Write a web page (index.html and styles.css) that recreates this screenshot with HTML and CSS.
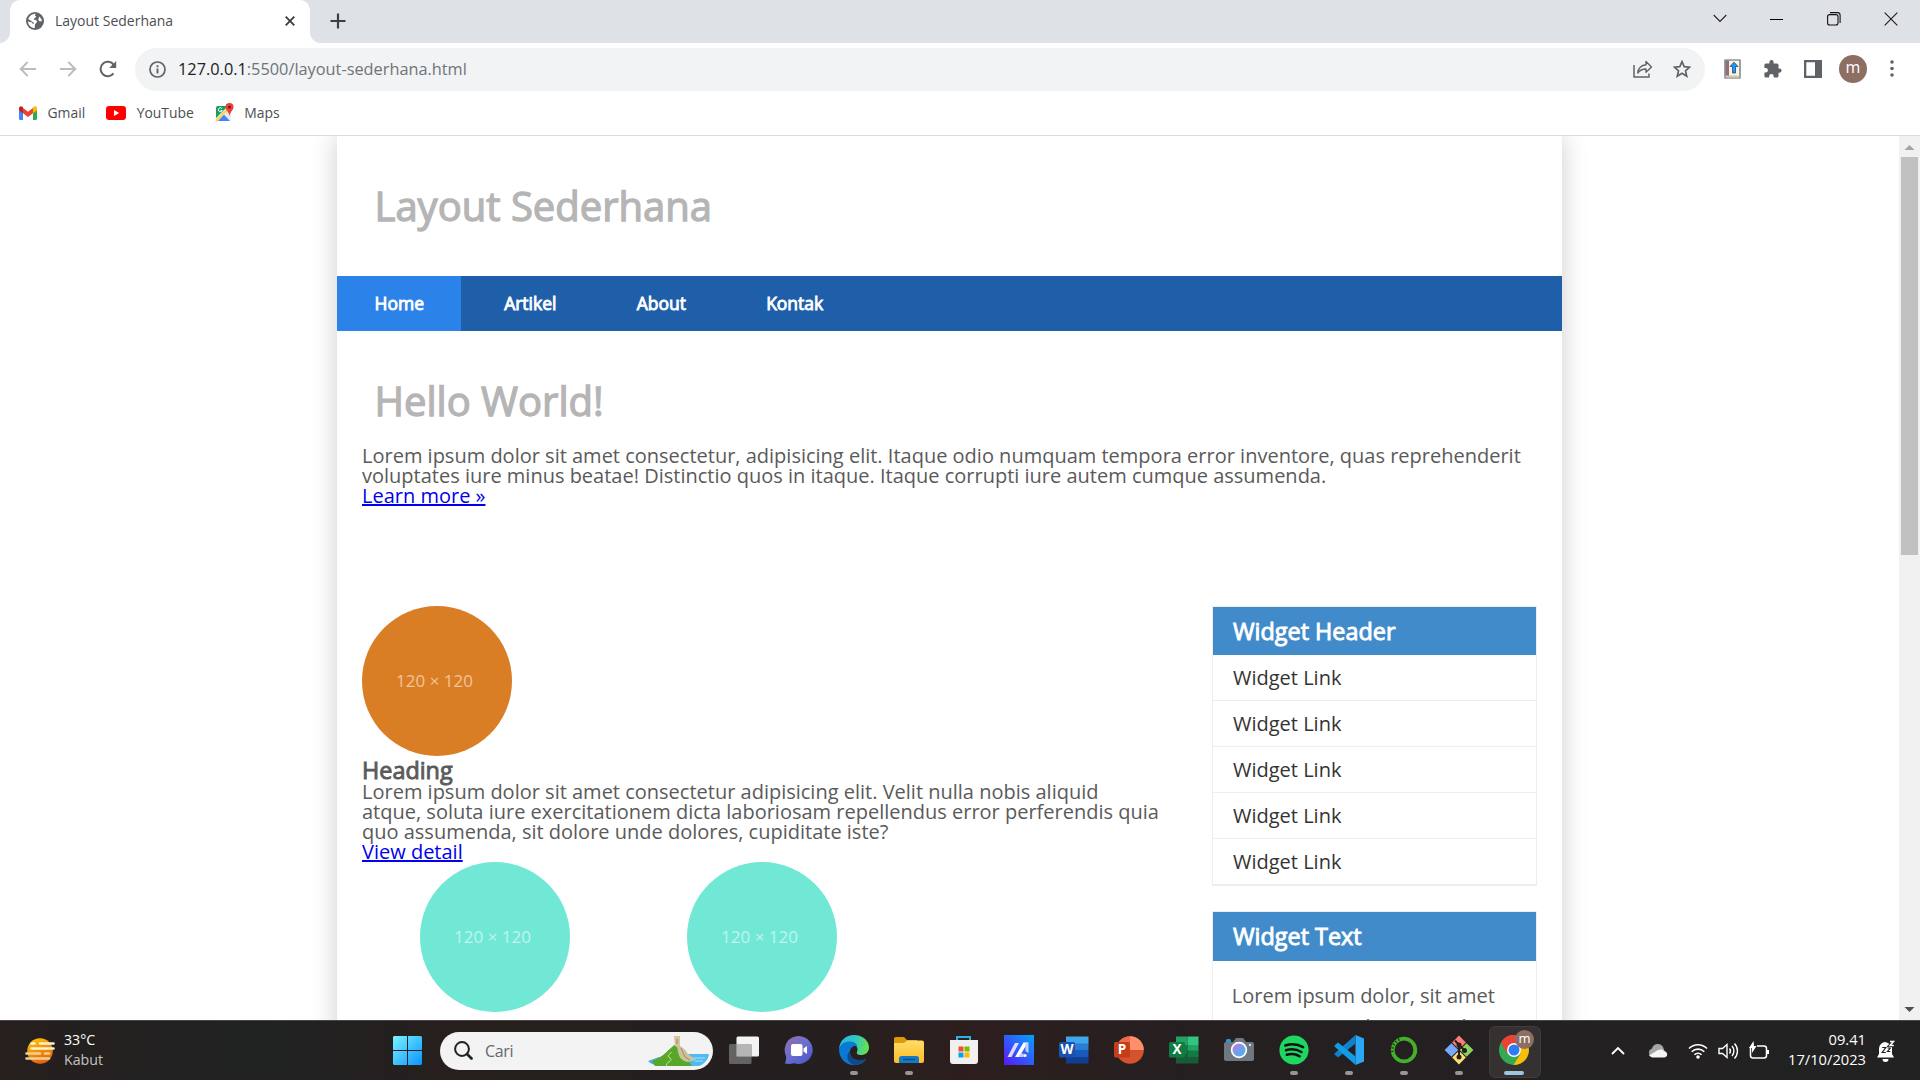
FILE: index.html
```
<!DOCTYPE html>
<html lang="id">
<head>
<meta charset="utf-8">
<title>Layout Sederhana</title>
<link rel="stylesheet" href="styles.css">
</head>
<body>
<div class="screen">
  <header class="browser">
    <div class="tabstrip">
      <div class="tab">
        <svg class="favicon" width="18" height="18" viewBox="0 0 18 18"><circle cx="9" cy="9" r="9" fill="#5f6368"/><path d="M10 1.800C8.500 3 8.800 4 10.300 4.300 9.800 6 8 6 7.700 7.500 9.500 7.700 11.300 8.300 11 10 10.600 11.300 9.300 11 9 12.500L8.700 16C5 15.800 2 13 2 9.400L5.500 10.300C6.500 10.600 6.200 12 7.600 12.300L7.700 10.400C6 10 5.500 8.500 2.300 7.200 3.200 3.900 6.300 1.700 10 1.800ZM13 4.400C14.700 5.600 15.800 7 16 9.200 14.800 9.400 13.300 9.500 12.500 8.200 11.800 6.800 13.300 6 13 4.400Z" fill="#fff"/></svg>
        <span class="tab-title">Layout Sederhana</span>
        <svg class="tab-close" width="10" height="10" viewBox="0 0 10 10"><path d="M.7.7 9.300 9.300M9.300.7.7 9.300" stroke="#3c4043" stroke-width="1.900"/></svg>
      </div>
      <svg class="new-tab" width="16" height="16" viewBox="0 0 16 16"><path d="M8 .5v15M.5 8h15" stroke="#3c4043" stroke-width="2.200"/></svg>
      <div class="window-controls">
        <svg width="14" height="9" viewBox="0 0 14 9"><path d="M.7 1 7 7.500 13.300 1" fill="none" stroke="#222" stroke-width="1.100"/></svg>
        <svg width="14" height="9" viewBox="0 0 14 9"><path d="M0 5.500h13" stroke="#000"/></svg>
        <svg width="14" height="14" viewBox="0 0 14 14"><rect x=".6" y="2.600" width="10.400" height="10.400" rx="2" fill="none" stroke="#111" stroke-width="1.100"/><path d="M3 .6h7.500a2.600 2.600 0 0 1 2.600 2.600V11" fill="none" stroke="#111" stroke-width="1.100"/></svg>
        <svg width="14" height="14" viewBox="0 0 14 14"><path d="M.7.7 13.300 13.300M13.300.7.7 13.300" stroke="#222" stroke-width="1.200"/></svg>
      </div>
    </div>
    <div class="toolbar">
      <div class="nav-buttons">
        <svg width="18" height="16" viewBox="0 0 18 16"><path d="M17 8H2M8.700 1 1.700 8l7 7" fill="none" stroke="#babcbe" stroke-width="1.900"/></svg>
        <svg width="18" height="16" viewBox="0 0 18 16"><path d="M1 8h15M9.300 1l7 7-7 7" fill="none" stroke="#babcbe" stroke-width="1.900"/></svg>
        <svg width="18" height="18" viewBox="0 0 18 18"><path d="M14.500 13.300A7.200 7.200 0 1 1 14.700 4.900" fill="none" stroke="#5f6368" stroke-width="2"/><path d="M17.200 1v7h-7Z" fill="#5f6368"/></svg>
      </div>
      <div class="omnibox">
        <svg class="info" width="17" height="17" viewBox="0 0 17 17"><circle cx="8.500" cy="8.500" r="7.500" fill="none" stroke="#5f6368" stroke-width="1.700"/><path d="M8.500 7.500v5M8.500 4.300v1.900" stroke="#5f6368" stroke-width="1.900"/></svg>
        <span class="url"><b>127.0.0.1</b>:5500/layout-sederhana.html</span>
        <svg class="share" width="20" height="18" viewBox="0 0 20 18"><path d="M1 5v12h15v-3.500" fill="none" stroke="#5f6368" stroke-width="1.500"/><path d="M4.800 13C5 8.500 8.300 5 13 4.800V1.500L18.500 7 13 12.300V9C9.500 9 7 10 4.800 13Z" fill="none" stroke="#5f6368" stroke-width="1.400" stroke-linejoin="round"/></svg>
        <svg class="star" width="18" height="18" viewBox="0 0 18 18"><path d="M9 1.700 11.200 6.700 16.600 7.200 12.500 10.800 13.700 16.200 9 13.300 4.300 16.200 5.500 10.800 1.400 7.200 6.800 6.700Z" fill="none" stroke="#5f6368" stroke-width="1.700"/></svg>
      </div>
      <div class="extensions">
        <svg width="17" height="20" viewBox="0 0 17 20"><path d="M1 1h15v18H1Z" fill="#fdf3dc" stroke="#52657a" stroke-width="1.200"/><path d="M1.500 1.500H5v15.500H1.500Z" fill="#8f6d7d"/><path d="M1.500 16.500h14v2h-14Z" fill="#d8c7a4"/><path d="M10 3.200 14 7.500H11.500V14h-3V7.500H6Z" fill="#2196f3" stroke="#174f86" stroke-width=".8"/></svg>
        <svg width="18" height="18" viewBox="0 0 18 18"><path d="M15.500 8.500h-1V5a1.600 1.600 0 0 0-1.600-1.600H9.600V2.200a2.100 2.100 0 0 0-4.200 0v1.200H2A1.600 1.600 0 0 0 .4 5v3h1.200a2.300 2.300 0 0 1 0 4.600H.4V16A1.600 1.600 0 0 0 2 17.600h3.100v-1.200a2.300 2.300 0 0 1 4.600 0v1.200h3.200a1.600 1.600 0 0 0 1.600-1.600v-3.300h1a2.100 2.100 0 0 0 0-4.200Z" fill="#5f6368"/></svg>
        <svg width="18" height="18" viewBox="0 0 18 18"><path d="M0 0h18v18H0ZM2.300 2.300v13.400h8.700V2.300Z" fill="#5f6368" fill-rule="evenodd"/></svg>
        <span class="avatar">m</span>
        <svg width="4" height="17" viewBox="0 0 4 17"><g fill="#5f6368"><circle cx="2" cy="2" r="1.800"/><circle cx="2" cy="8.500" r="1.800"/><circle cx="2" cy="15" r="1.800"/></g></svg>
      </div>
    </div>
    <div class="bookmarks">
      <span class="bookmark"><svg width="18" height="14" viewBox="0 0 18 14"><path d="M0 2v10.800A1.200 1.200 0 0 0 1.200 14H4V5Z" fill="#4285f4"/><path d="M18 2v10.800a1.200 1.200 0 0 1-1.200 1.200H14V5Z" fill="#34a853"/><path d="M4 7.300V2l5 3.800L14 2v5.300L9 11Z" fill="#ea4335"/><path d="M0 2.300C0 .2 2 -.4 3.300.7L4 1.300v6L0 4.300Z" fill="#c5221f"/><path d="M18 2.300C18 .2 16-.4 14.700.7L14 1.300v6l4-3Z" fill="#fbbc04"/></svg>Gmail</span>
      <span class="bookmark yt"><svg width="20" height="14" viewBox="0 0 20 14"><rect width="20" height="14" rx="3.200" fill="#f00"/><path d="M8 4v6l5.200-3Z" fill="#fff"/></svg>YouTube</span>
      <span class="bookmark maps"><svg width="19" height="19" viewBox="0 0 19 19"><rect x="1" y="3" width="15" height="15" rx="2" fill="#e8eaed"/><path d="M1 5a2 2 0 0 1 2-2h10L1 15Z" fill="#1a9e5c"/><path d="M1 18 14 5" stroke="#fdd663" stroke-width="2.600"/><path d="M3 18l6-6.200 6 6.200Z" fill="#4285f4"/><path d="M7 5.600A2 2 0 1 0 7.200 7.500H5.500" fill="none" stroke="#fff" stroke-width="1"/><path d="M14.500 0a4 4 0 0 1 4 4c0 3.300-3.300 4.500-4 9-.7-4.500-4-5.700-4-9a4 4 0 0 1 4-4Z" fill="#ea4335"/><circle cx="14.500" cy="4" r="1.500" fill="#811411"/></svg>Maps</span>
    </div>
  </header>

  <div class="viewport">
    <div class="page">
      <div class="container">
        <header class="site-header"><h1>Layout Sederhana</h1></header>
        <nav class="site-nav"><a class="active">Home</a><a>Artikel</a><a>About</a><a>Kontak</a></nav>
        <section class="hero">
          <h1>Hello World!</h1>
          <p>Lorem ipsum dolor sit amet consectetur, adipisicing elit. Itaque odio numquam tempora error inventore, quas reprehenderit voluptates iure minus beatae! Distinctio quos in itaque. Itaque corrupti iure autem cumque assumenda.</p>
          <a class="link">Learn more »</a>
        </section>
        <div class="columns">
          <main class="article">
            <div class="circle orange">120 × 120</div>
            <h3>Heading</h3>
            <p>Lorem ipsum dolor sit amet consectetur adipisicing elit. Velit nulla nobis aliquid<br>atque, soluta iure exercitationem dicta laboriosam repellendus error perferendis quia<br>quo assumenda, sit dolore unde dolores, cupiditate iste?</p>
            <a class="link">View detail</a>
            <div class="features">
              <div class="circle teal">120 × 120</div>
              <div class="circle teal">120 × 120</div>
            </div>
          </main>
          <aside class="sidebar">
            <div class="widget">
              <h3>Widget Header</h3>
              <ul><li>Widget Link</li><li>Widget Link</li><li>Widget Link</li><li>Widget Link</li><li>Widget Link</li></ul>
            </div>
            <div class="widget">
              <h3>Widget Text</h3>
              <p>Lorem ipsum dolor, sit amet consectetur adipisicing elit.</p>
            </div>
          </aside>
        </div>
      </div>
    </div>
    <div class="scrollbar">
      <svg width="21" height="21" viewBox="0 0 21 21"><path d="M5.500 14 10.500 9l5 5Z" fill="#a3a3a3"/></svg>
      <div class="thumb"></div>
      <svg class="down" width="21" height="21" viewBox="0 0 21 21"><path d="M5.500 8 10.500 13l5-5Z" fill="#505050"/></svg>
    </div>
  </div>

  <footer class="taskbar">
    <div class="weather">
      <svg width="30" height="26" viewBox="0 0 30 26"><defs><linearGradient id="sun" x1="0" y1="0" x2=".4" y2="1"><stop offset="0" stop-color="#ffc907"/><stop offset="1" stop-color="#e8660c"/></linearGradient></defs><circle cx="15" cy="13" r="12.800" fill="url(#sun)"/><g stroke-width="2.600" stroke-linecap="round"><path d="M6.500 5.500H9.500M15 5.500H28.500M6.500 10.500H28.500" stroke="#fff1cf"/><path d="M1.500 15.500H15M20 15.500h4M1.500 20.500H24" stroke="#f0cf97"/></g></svg>
      <div class="weather-text"><span>33°C</span><span class="dim">Kabut</span></div>
    </div>
    <svg class="start" width="29" height="29" viewBox="0 0 29 29"><defs><linearGradient id="win" x1="0" y1="0" x2="1" y2="1"><stop offset="0" stop-color="#7af2ff"/><stop offset="1" stop-color="#0a94ff"/></linearGradient></defs><path d="M1 0h13v14H0V1ZM15 0h13l1 1v13H15ZM0 15h14v14H1l-1-1ZM15 15h14v13l-1 1H15Z" fill="url(#win)"/></svg>
    <div class="search">
      <svg width="19" height="19" viewBox="0 0 19 19"><circle cx="8" cy="8" r="6.900" fill="none" stroke="#222" stroke-width="2"/><path d="m13 13 4.500 4.500" stroke="#222" stroke-width="2.700" stroke-linecap="round"/></svg>
      <span>Cari</span>
      <svg class="art" width="63" height="32" viewBox="0 0 63 32"><path d="M1 26 12 22 22 31H12C6 30 3 28 1 26Z" fill="#4cabec"/><path d="M40 19h22c-1 6-5 10-10 12H35Z" fill="#4fb9f0"/><path d="M44 23h14M48 26h8" stroke="#a8e4ff"/><path d="M8 31 5 26C17 22 21 14 29 9L45 31Z" fill="#58a62a"/><path d="M20 31c-3-4 7-4 3-8-5-3 2-4 1-6" fill="none" stroke="#c5e88a"/><path d="M27 1h6v13l-5-3Z" fill="#d8c39c"/><path d="M30 10c5 1 9 5 11 9l8 6-9 2C32 25 31 19 30 10Z" fill="#cfc29b"/><path d="m34 13 4 9 5 3" fill="none" stroke="#998c6c"/><path d="M30 4v5" stroke="#9c805a"/></svg>
    </div>
    <div class="apps">
      <div class="app"><svg width="30" height="30" viewBox="0 0 30 30"><rect x="7.500" y="1.500" width="22.500" height="20" rx="1.500" fill="#f3f3f3"/><rect y="9" width="22.500" height="20" rx="1.500" fill="#707070" fill-opacity=".85"/><path d="M7.500 9h15v12.500h-15Z" fill="#b5b5b5"/></svg></div>
      <div class="app"><svg width="30" height="30" viewBox="0 0 30 30"><defs><linearGradient id="chat" x1="0" y1="0" x2=".8" y2="1"><stop offset="0" stop-color="#9a6da0"/><stop offset=".5" stop-color="#6c6fd0"/><stop offset="1" stop-color="#5058c8"/></linearGradient></defs><path d="M15 1a14 14 0 1 1-5 27.200Q6 29.500.8 28.500 2.500 26 2 21A14 14 0 0 1 15 1Z" fill="url(#chat)"/><rect x="7" y="9" width="11.500" height="12" rx="2" fill="#fff"/><path d="M19.500 13.500 23 11v8l-3.500-2.500Z" fill="#fff"/></svg></div>
      <div class="app run"><svg width="30" height="30" viewBox="0 0 30 30"><defs><linearGradient id="eg" x1="0" y1=".3" x2="1" y2=".5"><stop offset="0" stop-color="#28b8e6"/><stop offset=".5" stop-color="#31c5c8"/><stop offset="1" stop-color="#66e34c"/></linearGradient></defs><path d="M0 14C1 5 7 0 15 0c9 0 15 6 15 12.500 0 5-4 7.500-8 7.500-3 0-5-1-4-3C20 12 16 8 11 8 6 8 2 10 0 14Z" fill="url(#eg)"/><path d="M0 14c1-4 5-7.500 10.500-7.500 4 0 7 2 8 4.500-4-1-8 2-7.500 7 .5 6 7 9 16 6.500C24 28.500 20 30 15 30 6 30 0 23 0 14Z" fill="#0a79d4"/><path d="M11 16c-1 7 6 11 16 8-3 4-8 6-12 6-7-2-9-10-4-14Z" fill="#114a8b"/></svg></div>
      <div class="app run"><svg width="30" height="30" viewBox="0 0 30 30"><defs><linearGradient id="fold" x1="0" y1="0" x2="0" y2="1"><stop offset="0" stop-color="#ffdc69"/><stop offset="1" stop-color="#fdbd22"/></linearGradient></defs><path d="M0 4a2 2 0 0 1 2-2h8l3 3h10v5H0Z" fill="#dc9a0b"/><path d="M0 8h10l3-2.500h15a2 2 0 0 1 2 2V26a2 2 0 0 1-2 2H2a2 2 0 0 1-2-2Z" fill="url(#fold)"/><path d="M5 28v-4.500A2.500 2.500 0 0 1 7.500 21h15a2.500 2.500 0 0 1 2.500 2.500V28Z" fill="#1479c6"/><path d="M9 24.500h12" stroke="#0a4c85" stroke-width="1.300"/></svg></div>
      <div class="app"><svg width="30" height="30" viewBox="0 0 30 30"><path d="M8 6V2h13v4" fill="none" stroke="#27b3ea" stroke-width="2"/><path d="M1 5h28v21a3 3 0 0 1-3 3H4a3 3 0 0 1-3-3Z" fill="#f0f0f0"/><path fill="#f25022" d="M9.500 11.500h5v5h-5Z"/><path fill="#7fba00" d="M15.500 11.500h5v5h-5Z"/><path fill="#00a4ef" d="M9.500 17.500h5v5h-5Z"/><path fill="#ffb900" d="M15.500 17.500h5v5h-5Z"/></svg></div>
      <div class="app"><svg width="30" height="30" viewBox="0 0 30 30"><defs><linearGradient id="as" x1="0" y1="1" x2="1" y2="0"><stop offset="0" stop-color="#5c17f5"/><stop offset="1" stop-color="#04a2ff"/></linearGradient></defs><path fill="url(#as)" d="M0 0h30v30H0Z"/><path d="m3.500 22 7.500-14h4L7.500 22Z" fill="#d9dcff"/><path d="m11 22 8.500-14.500h4.500L15 22Z" fill="#fff"/><path d="M21.500 7.500H24.500V18l-3-2ZM14.500 22l2-3.500h3V22Z" fill="#c3cffd"/><circle cx="21" cy="20.500" r="1.600" fill="#fff"/></svg></div>
      <div class="app"><svg width="30" height="30" viewBox="0 0 30 30"><path fill="#41a5ee" d="M7 1.500h22.500V9H7Z"/><path fill="#2b7cd3" d="M7 8.500h22.500V15H7Z"/><path fill="#185abd" d="M7 15h22.500v7H7Z"/><path fill="#103f91" d="M7 22h22.500v6.500H7Z"/><rect y="7" width="16" height="15.500" rx="1.500" fill="#1851b0"/><text class="glyph" x="8" y="19">W</text></svg></div>
      <div class="app"><svg width="30" height="30" viewBox="0 0 30 30"><circle cx="16" cy="15" r="13.800" fill="#d35230"/><path d="M2.200 15A13.800 13.800 0 0 1 16 1.200V15Z" fill="#ed6c47"/><path d="M16 1.200A13.800 13.800 0 0 1 29.800 15H16Z" fill="#ff8f6b"/><rect y="7" width="16" height="15.500" rx="1.500" fill="#c43e1c"/><text class="glyph" x="8" y="19">P</text></svg></div>
      <div class="app"><svg width="30" height="30" viewBox="0 0 30 30"><path fill="#21a366" d="M7 1.500h11.500V10H7Z"/><path fill="#33c481" d="M18.500 1.500h11V10h-11Z"/><path fill="#107c41" d="M7 10h11.500v9H7Z"/><path fill="#21a366" d="M18.500 10h11v6h-11Z"/><path fill="#185c37" d="M7 19h22.500v9.500H7Z"/><path fill="#107c41" d="M18.500 15.500h11V22h-11Z"/><rect y="7" width="16" height="15.500" rx="1.500" fill="#107c41"/><text class="glyph" x="8" y="19">X</text></svg></div>
      <div class="app"><svg width="30" height="30" viewBox="0 0 30 30"><defs><linearGradient id="lens" x1="0" y1="0" x2="1" y2="1"><stop offset="0" stop-color="#c07bdf"/><stop offset="1" stop-color="#35b9f5"/></linearGradient></defs><rect x="2" y="4" width="5" height="5" rx="1.500" fill="#229bd8"/><path d="M0 9a2 2 0 0 1 2-2h7l3-4h7l3 4h6a2 2 0 0 1 2 2v15a2 2 0 0 1-2 2H2a2 2 0 0 1-2-2Z" fill="#6f7880"/><circle cx="15" cy="15" r="8.200" fill="#fff"/><circle cx="15" cy="15" r="6.500" fill="url(#lens)"/><circle cx="26" cy="10" r="1" fill="#fff"/></svg></div>
      <div class="app run"><svg width="30" height="30" viewBox="0 0 30 30"><circle cx="15" cy="15" r="14.600" fill="#1ed760"/><path d="M6.300 10.500c6-1.900 12.700-1.300 17.800 1.700M7 15.300c5.300-1.600 10.800-1 15.400 1.700M7.800 19.800c4.500-1.300 9-.8 12.900 1.500" fill="none" stroke="#111" stroke-width="2.500" stroke-linecap="round"/></svg></div>
      <div class="app run"><svg width="30" height="30" viewBox="0 0 30 30"><path d="M21.500 0 30 3.500v23L21.500 30Z" fill="#2aa8f5"/><path d="M21.500 0v8.500L4 22.500l-3.500-3V18.500Z" fill="#1080ca"/><path d="M21.500 30v-8.500L4 7.500l-3.500 3v1Z" fill="#149be5"/></svg></div>
      <div class="app run"><svg width="30" height="30" viewBox="0 0 30 30"><circle cx="15" cy="15" r="11.300" fill="none" stroke="#43b02a" stroke-width="3.800"/><path d="M3.500 17A11.500 11.500 0 0 1 12 4" fill="none" stroke="#1e3c18" stroke-width="2.500" stroke-dasharray="1.300 2.200"/></svg></div>
      <div class="app run"><svg width="30" height="30" viewBox="0 0 30 30"><g transform="rotate(45 15 15)"><path fill="#ff7b7b" d="M4.800 4.800h9.700v9.700H4.800Z"/><path fill="#8bd15b" d="M15.500 4.800h9.700v9.700h-9.700Z"/><path fill="#7aa8f8" d="M4.800 15.500h9.700v9.700H4.800Z"/><path fill="#ffde75" d="M15.500 15.500h9.700v9.700h-9.700Z"/></g><path d="M11 5.500 15 10v13M15 10l6 5.500" fill="none" stroke="#231f20" stroke-width="2"/><g fill="#231f20"><circle cx="15" cy="10" r="2.500"/><circle cx="20.500" cy="15.500" r="2.500"/><circle cx="15" cy="22" r="2.500"/></g></svg></div>
      <div class="app run current"><svg width="30" height="30" viewBox="0 0 30 30"><circle cx="15" cy="15" r="15" fill="#34a853"/><path d="M2 7.500A15 15 0 0 1 28 7.500L15 15Z" fill="#ea4335"/><path d="M2 7.500 8.500 18.800 15 8H28.300A15 15 0 0 0 2 7.500Z" fill="#ea4335"/><path d="M28.200 8A15 15 0 0 1 14.500 30L21.500 18.700V8Z" fill="#fbbc05"/><circle cx="15" cy="15" r="7" fill="#fff"/><circle cx="15" cy="15" r="5.500" fill="#2f7cf0"/></svg><span class="badge">m</span></div>
    </div>
    <div class="tray">
      <svg width="14" height="9" viewBox="0 0 14 9"><path d="m1 8 6-6 6 6" fill="none" stroke="#fff" stroke-width="1.900"/></svg>
      <svg class="cloud" width="21" height="15" viewBox="0 0 21 15"><path d="M5 14a4.500 4.500 0 0 1 0-8.500A6 6 0 0 1 16 4l2 5-4 5Z" fill="#a5a5a5"/><path d="M2 12.500 11 7c3-1 5-.5 6 1 4 .5 4.500 6.500 0 6.500H5Z" fill="#f5f5f5"/></svg>
      <svg class="wifi" width="20" height="17" viewBox="0 0 20 17"><g fill="none" stroke="#fff" stroke-width="1.600"><path d="M1 6.500a12.700 12.700 0 0 1 18 0M3.700 9.700a8.900 8.900 0 0 1 12.600 0M6.400 12.700a5.100 5.100 0 0 1 7.200 0"/></g><circle cx="10" cy="15" r="1.800" fill="#fff"/></svg>
      <svg class="sound" width="21" height="18" viewBox="0 0 21 18"><g fill="none" stroke="#fff" stroke-width="1.400"><path d="M1 6.500h3.500L9 2.500v13l-4.500-4H1Z"/><path d="M11.500 6.500a4 4 0 0 1 0 5M14 4a7.500 7.500 0 0 1 0 10M16.500 1.500a11 11 0 0 1 0 15"/></g></svg>
      <svg class="battery" width="21" height="20" viewBox="0 0 21 20"><path d="M8 5h7a2.500 2.500 0 0 1 2.500 2.500v7A2.500 2.500 0 0 1 15 17H4a2.500 2.500 0 0 1-2.500-2.500V6" fill="none" stroke="#fff" stroke-width="1.500"/><path d="M18 9h2v4h-2ZM4.500 0 0 7h3v5l4.500-7H5Z" fill="#fff"/></svg>
      <div class="clock"><span>09.41</span><span>17/10/2023</span></div>
      <svg class="bell" width="19" height="22" viewBox="0 0 19 22"><path d="M0 17.500 2 14V8.500A6.500 6.500 0 0 1 8.500 2L15 5v9l2 3.500ZM5.500 19h6a3 3 0 0 1-6 0Z" fill="#fff"/><path d="M5.200 7.500h3.600l-3.600 5h3.600M10.500 8h2.800l-2.800 3.500h2.800" fill="none" stroke="#231f20" stroke-width="1.200"/><path d="M13 1.500h3.500L13 5.500h3.800" fill="none" stroke="#231f20" stroke-width="3.200"/><path d="M13 1.500h3.500L13 5.500h3.800" fill="none" stroke="#fff" stroke-width="1.500"/></svg>
    </div>
  </footer>
</div>
</body>
</html>
```
FILE: styles.css
```
* { box-sizing: border-box; margin: 0; padding: 0; }
body { font-family: "Open Sans", "Noto Sans", sans-serif; background: #fff; overflow: hidden; }
svg { display: block; flex: none; }
.screen { width: 1920px; height: 1080px; display: flex; flex-direction: column; overflow: hidden; }

/* browser chrome */
.browser { flex: none; height: 136px; background: #fff; border-bottom: 1px solid #d9dadc; }
.tabstrip { height: 43px; background: #dee1e6; display: flex; align-items: center; padding-left: 10px; }
.tab { position: relative; width: 300px; height: 43px; background: #fff; border-radius: 10px 10px 0 0; display: flex; align-items: center; padding: 0 15px 1px 16px; }
.tab::before, .tab::after { content: ""; position: absolute; bottom: 0; width: 10px; height: 10px; }
.tab::before { left: -10px; background: radial-gradient(circle at 0 0, transparent 9.5px, #fff 10px); }
.tab::after { right: -10px; background: radial-gradient(circle at 100% 0, transparent 9.5px, #fff 10px); }
.tab-title { margin-left: 11px; font-size: 14px; line-height: 20px; color: #4b4f53; flex: 1; }
.new-tab { margin: 0 0 1px 19.5px; }
.window-controls { margin-left: auto; display: flex; align-items: center; gap: 43px; padding: 0 22px 6px 0; }
.toolbar { height: 51px; display: flex; align-items: center; padding: 0 26px 0 18.5px; }
.nav-buttons { display: flex; align-items: center; gap: 22px; width: 116.5px; }
.omnibox { width: 1570px; height: 43px; margin-top: 1px; border-radius: 22px; background: #f1f3f4; display: flex; align-items: center; padding: 0 14px; }
.url { margin-left: 12px; font-size: 16.32px; line-height: 24px; color: #707478; flex: 1; }
.url b { font-weight: 400; color: #202124; }
.star { margin-left: 20px; }
.extensions { display: flex; align-items: center; margin-left: 19px; }
.extensions > :nth-child(2) { margin-left: 23px; }
.extensions > :nth-child(3) { margin-left: 22px; }
.avatar { width: 28px; height: 28px; margin: 0 23px 0 17px; border-radius: 50%; background: #8d6e63; color: #fff; font-size: 16px; line-height: 25px; text-align: center; }
.bookmarks { height: 37px; display: flex; align-items: center; padding-left: 19px; }
.bookmark { display: flex; align-items: center; gap: 10.5px; font-size: 13.9px; line-height: 20px; color: #4b4f53; }
.yt { margin-left: 21px; }
.maps { margin-left: 21px; }

/* page */
.viewport { flex: none; height: 884px; display: flex; overflow: hidden; }
.page { width: 1899px; background: #fff; display: flex; justify-content: center; overflow: hidden; }
.container { width: 1225px; height: 1400px; flex: none; background: #fff; box-shadow: 0 0 25px rgba(0, 0, 0, .2); font-size: 20px; line-height: 20px; color: #5a5a5a; }
h1 { font-size: 40px; line-height: 40px; font-weight: 400; color: #b5b5b5; -webkit-text-stroke: 1.3px currentColor; }
.site-header { padding: 50px 37.5px; }
.site-nav { height: 55px; background: #1f5faa; display: flex; gap: 5.2px; }
.site-nav a { padding: 0 37.5px; font-size: 17.5px; line-height: 55px; color: #fff; -webkit-text-stroke: .85px currentColor; }
.site-nav .active { background: #2b83ea; }
.hero { height: 275px; padding: 50px 25px 0; }
.hero h1 { padding-left: 12.5px; margin-bottom: 25px; }
.link { display: block; color: #0000ee; text-decoration: underline 2px; }
.columns { display: flex; justify-content: space-between; padding: 0 25px; }
.article { width: 825px; white-space: nowrap; }
h3 { font-size: 23.4px; line-height: 23.4px; font-weight: 400; -webkit-text-stroke: .9px currentColor; }
.article h3 { margin: 3.2px 0 -1px; }
.circle { width: 150px; height: 150px; border-radius: 50%; display: flex; align-items: center; justify-content: center; padding-right: 5px; font-size: 17px; }
.orange { background: #da7e26; color: #efc59d; }
.teal { background: #71e8d6; color: #c0f4ec; }
.features { display: flex; gap: 117px; padding-left: 58px; margin-top: .4px; }
.sidebar { width: 325px; }
.widget { border: 1px solid #eee; margin-bottom: 25px; }
.widget h3 { padding: 12.5px 20px; background: #428bca; color: #fff; }
.widget li { list-style: none; padding: 12.5px 20px; border-bottom: 1px solid #eee; color: #333; }
.widget p { padding: 19.25px 18.75px; line-height: 31.2px; }
.scrollbar { width: 21px; background: #f1f1f1; display: flex; flex-direction: column; align-items: center; }
.thumb { width: 17px; height: 398px; background: #c1c1c1; }
.down { margin-top: auto; }

/* taskbar */
.taskbar { flex: none; height: 60px; border-top: 1px solid #484545; background: linear-gradient(90deg, #261f1e 0, #202222 260px, #261f1e 440px, #241f1f 800px, #2d1e1e 960px, #251f20 1200px, #222 1920px); display: flex; align-items: center; color: #fff; font-size: 14.2px; line-height: 20px; }
.weather { display: flex; align-items: center; gap: 9px; width: 393px; padding-left: 25px; }
.weather-text { display: flex; flex-direction: column; margin-top: -2px; }
.dim { color: #c4c2c2; }
.search { width: 273px; height: 38px; margin-left: 18px; border-radius: 19px; background: #f3f3f3; color: #686868; display: flex; align-items: center; padding: 0 3px 0 14px; font-size: 16px; overflow: hidden; letter-spacing: -.3px; }
.search span { margin-left: 12px; flex: 1; }
.apps { display: flex; margin-left: 3px; }
.app { position: relative; width: 55px; height: 50px; display: flex; align-items: center; justify-content: center; }
.app > svg { margin-bottom: 1px; }
.run::after { content: ""; position: absolute; left: 23.5px; bottom: 1px; width: 8px; height: 4px; border-radius: 2px; background: #999494; }
.current::before { content: ""; position: absolute; left: 2.5px; top: 0; width: 50px; height: 50px; border-radius: 6px; background: #353131; border: 1px solid #413d3d; }
.current svg { position: relative; }
.current::after { left: 17.5px; width: 20px; background: #9bc8de; }
.badge { position: absolute; left: 29px; top: 4px; width: 19px; height: 19px; border-radius: 50%; background: #8d6e63; font-size: 13px; line-height: 16px; text-align: center; }
.glyph { font: 700 13.5px "Open Sans", sans-serif; fill: #fff; text-anchor: middle; }
.tray { display: flex; align-items: center; margin-left: auto; padding-right: 24px; }
.cloud { margin-left: 22px; }
.wifi { margin-left: 20px; }
.sound { margin-left: 10px; }
.battery { margin-left: 10px; }
.clock { display: flex; flex-direction: column; align-items: flex-end; width: 96px; margin-top: -2.5px; font-size: 14.7px; }
.bell { margin-left: 11px; }
```
